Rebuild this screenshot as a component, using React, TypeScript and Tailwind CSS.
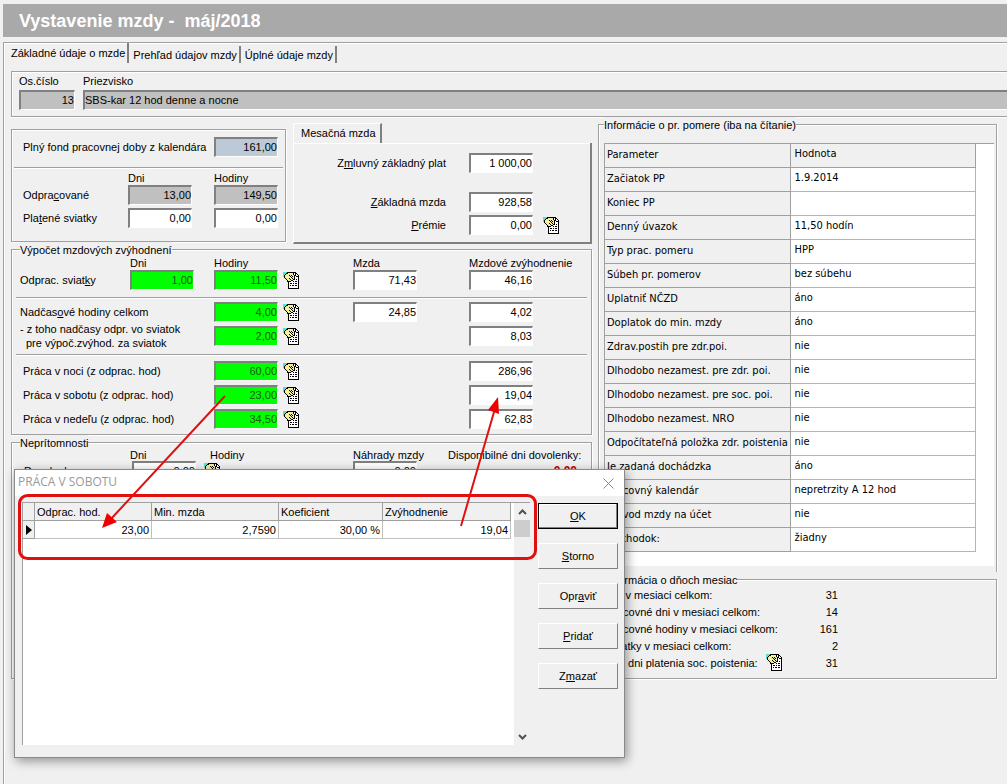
import { useId } from 'react'
import type { ReactNode } from 'react'

const ETCHED = 'border border-[#a0a0a0] shadow-[1px_1px_0_#fff,inset_1px_1px_0_#fff]'

const params = [
  ['Začiatok PP', '1.9.2014'],
  ['Koniec PP', ''],
  ['Denný úvazok', '11,50 hodín'],
  ['Typ prac. pomeru', 'HPP'],
  ['Súbeh pr. pomerov', 'bez súbehu'],
  ['Uplatniť NČZD', 'áno'],
  ['Doplatok do min. mzdy', 'áno'],
  ['Zdrav.postih pre zdr.poi.', 'nie'],
  ['Dlhodobo nezamest. pre zdr. poi.', 'nie'],
  ['Dlhodobo nezamest. pre soc. poi.', 'nie'],
  ['Dlhodobo nezamest. NRO', 'nie'],
  ['Odpočítateľná položka zdr. poistenia', 'nie'],
  ['Je zadaná dochádzka', 'áno'],
  ['Pracovný kalendár', 'nepretrzity A 12 hod'],
  ['Prevod mzdy na účet', 'nie'],
  ['Dôchodok:', 'žiadny'],
]

const monthDays = [
  { label: 'Dni v mesiaci celkom:', value: '31' },
  { label: 'Pracovné dni v mesiaci celkom:', value: '14' },
  { label: 'Pracovné hodiny v mesiaci celkom:', value: '161' },
  { label: 'Sviatky v mesiaci celkom:', value: '2' },
  { label: 'Kal. dni platenia soc. poistenia:', value: '31', detail: true },
]

export default function App() {
  return (
    <div className="relative flex min-h-screen flex-col overflow-hidden bg-[#f0f0f0] pt-1 pl-[3px] font-['Liberation_Sans',sans-serif] text-[11px] leading-3.5 text-black">
      <header className="flex h-[33px] items-center bg-[#a9a9a9] pl-4">
        <h1 className="text-[18px] leading-5 font-bold whitespace-pre text-white">Vystavenie mzdy -  máj/2018</h1>
      </header>

      <main className="mt-[5px] grow border-t border-l border-[#a0a0a0] shadow-[inset_1px_1px_0_#fff]">
        <nav className="flex h-5 items-end" role="tablist">
          <Tab selected>Základné údaje o mzde</Tab>
          <Tab>Prehľad údajov mzdy</Tab>
          <Tab>Úplné údaje mzdy</Tab>
        </nav>

        <div className="pt-2 pl-[7px]">
          <PersonBar />
          <div className="flex">
            <div className="flex w-[581px] shrink-0 flex-col">
              <div className="mt-1.5 flex items-start gap-[7px]">
                <WorkedTime />
                <MonthlyWage />
              </div>
              <Bonuses />
              <Absences />
            </div>
            <div className="mr-2.5 ml-1.5 min-w-0 grow">
              <EmploymentInfo />
              <MonthInfo />
            </div>
          </div>
        </div>
      </main>

      <SaturdayDialog />
      <Annotations />
    </div>
  )
}

function Tab({ selected, children }: { selected?: boolean; children: ReactNode }) {
  return (
    <button
      type="button"
      role="tab"
      aria-selected={!!selected}
      className={`border-r-2 border-[#808080] whitespace-nowrap ${selected ? 'h-5 pr-0.5 pl-[7px]' : 'h-[17px] pr-0.5 pl-1'}`}
    >
      {children}
    </button>
  )
}

type Tone = 'white' | 'gray' | 'blue' | 'green'

const tones: Record<Tone, string> = {
  white: 'bg-white',
  gray: 'bg-[#c0c0c0]',
  blue: 'bg-[#bccad8]',
  green: 'bg-[#00ff00] text-[#1c5a1c]',
}

function Num({ value, tone = 'white', label, id }: { value: string; tone?: Tone; label?: string; id?: string }) {
  return (
    <input
      id={id}
      aria-label={label}
      defaultValue={value}
      readOnly={tone === 'gray'}
      className={`block h-5 w-16 rounded-none border-t-2 border-r border-b border-l-2 border-t-[#808080] border-r-white border-b-white border-l-[#808080] pb-0.5 text-right outline-none ${tones[tone]}`}
    />
  )
}

function DetailButton({ label }: { label: string }) {
  return (
    <button type="button" aria-label={label} className="block size-[17px] shrink-0">
      <svg viewBox="0 0 17 17" className="size-full" shapeRendering="crispEdges">
        <path d="M0 0h5v2H2v3H0z" fill="#4fe3d8" />
        <path d="M5 1h8l3 3v12H5z" fill="#fff" />
        <path d="M4 0h9v1H4zM12 1h1v3h-1zM13 1h1v1h-1zM14 2h1v1h-1zM13 4h2v1h-2zM15 3h1v13h-1zM5 10h1v6H5zM5 16h11v1H5z" fill="#000" />
        <path d="M3 1h7v1h1v6h-1v1H5V8H3V7H1V3h1V2h1z" fill="#f2f09a" />
        <path
          d="M3 1h2v1H3zM2 2h1v1H2zM1 3h1v3H1zM2 6h1v1H2zM3 7h1v1H3zM4 8h1v2H4zM10 1h1v2h-1zM11 3h1v5h-1zM6 3h1v1H6zM7 4h1v1H7zM8 5h1v1H8zM9 6h1v1H9zM10 7h1v1h-1zM8 3h1v1H8zM9 4h1v1H9zM6 6h1v1H6zM7 7h1v1H7zM8 8h2v1H8zM5 9h3v1H5z"
          fill="#000"
        />
        <path d="M13 7h1v1h-1zM10 9h1v1h-1zM12 9h2v1h-2zM7 11h2v1H7zM10 11h1v1h-1zM12 11h2v1h-2zM7 13h1v1H7zM9 13h2v1H9zM12 13h2v1h-2z" fill="#000" />
      </svg>
    </button>
  )
}

function Rule() {
  return <hr className="h-0.5 border-t border-b border-t-[#a0a0a0] border-b-white" />
}

function GroupTitle({ children }: { children: ReactNode }) {
  return <legend className="bg-[#f0f0f0] pt-0.5 leading-3">{children}</legend>
}

function PersonBar() {
  return (
    <section className="flex gap-2 border-t border-b border-l border-[#a0a0a0] pt-0.5 pb-1.5 pl-[7px] shadow-[0_1px_0_#fff,inset_1px_1px_0_#fff]">
      <div>
        <label htmlFor="os-cislo" className="block">Os.číslo</label>
        <input
          id="os-cislo"
          readOnly
          defaultValue="13"
          className="mt-0.5 block h-5 w-14 border-t-2 border-r border-b border-l-2 border-t-[#808080] border-r-white border-b-white border-l-[#808080] bg-[#c0c0c0] pb-0.5 text-right outline-none"
        />
      </div>
      <div className="grow">
        <label htmlFor="priezvisko" className="block">Priezvisko</label>
        <input
          id="priezvisko"
          readOnly
          defaultValue="SBS-kar 12 hod denne a nocne"
          className="mt-0.5 block h-5 w-full border-t-2 border-b border-l-2 border-t-[#808080] border-b-white border-l-[#808080] bg-[#c0c0c0] pb-0.5 outline-none"
        />
      </div>
    </section>
  )
}

function WorkedTime() {
  return (
    <section className={`mt-1.5 h-[113px] w-[275px] ${ETCHED}`}>
      <div className="flex items-center justify-between pt-[7px] pr-[7px] pb-2.5 pl-[11px]">
        <label htmlFor="fond">Plný fond pracovnej doby z kalendára</label>
        <Num id="fond" value="161,00" tone="blue" />
      </div>
      <div className="px-0.5">
        <Rule />
      </div>
      <div className="grid grid-cols-[105px_86px_64px] items-center pt-0.5 pl-[11px]">
        <span className="col-start-2">Dni</span>
        <span>Hodiny</span>
        <span>Odpra<u>c</u>ované</span>
        <Num label="Odpracované dni" value="13,00" tone="gray" />
        <Num label="Odpracované hodiny" value="149,50" tone="gray" />
        <span className="mt-[3px]">Pla<u>t</u>ené sviatky</span>
        <div className="mt-[3px]"><Num label="Platené sviatky dni" value="0,00" /></div>
        <div className="mt-[3px]"><Num label="Platené sviatky hodiny" value="0,00" /></div>
      </div>
    </section>
  )
}

function WageRow({ label, value, detail }: { label: ReactNode; value: string; detail?: boolean }) {
  const id = useId()
  return (
    <div className="flex items-center">
      <label htmlFor={id} className="mr-[23px] w-[152px] text-right">{label}</label>
      <Num id={id} value={value} />
      {detail && <div className="ml-2.5"><DetailButton label="Detail prémií" /></div>}
    </div>
  )
}

function MonthlyWage() {
  return (
    <section className="grow">
      <div role="tablist" className="flex">
        <button type="button" role="tab" aria-selected className="h-5 border-t border-r-2 border-l border-t-white border-r-[#808080] border-l-white pr-1 pb-0.5 pl-[7px]">
          Mesačná mzda
        </button>
      </div>
      <div className="border-r-2 border-b-2 border-l border-r-[#808080] border-b-[#808080] border-l-white pt-2.5 pb-[7px] shadow-[inset_0_1px_0_#fff]">
        <WageRow label={<>Z<u>m</u>luvný základný plat</>} value="1 000,00" />
        <div className="mt-[19px] flex flex-col gap-[3px]">
          <WageRow label={<><u>Z</u>ákladná mzda</>} value="928,58" />
          <WageRow label={<><u>P</u>rémie</>} value="0,00" detail />
        </div>
      </div>
    </section>
  )
}

type BonusProps = { label: ReactNode; name: string; days?: string; hours: string; wage?: string; bonus: string }

function BonusRow({ label, name, days, hours, wage, bonus }: BonusProps) {
  return (
    <div className="grid grid-cols-[110px_84px_69px_70px_116px_64px] items-center">
      <span className={`whitespace-nowrap ${days ? '' : 'col-span-2'}`}>{label}</span>
      {days && <Num label={`${name} dni`} value={days} tone="green" />}
      <Num label={`${name} hodiny`} value={hours} tone="green" />
      <DetailButton label={`Detail: ${name}`} />
      {wage ? <Num label={`${name} mzda`} value={wage} /> : <span />}
      <Num label={`${name} zvýhodnenie`} value={bonus} />
    </div>
  )
}

function Bonuses() {
  return (
    <fieldset className={`-mt-0.5 px-2 pb-[5px] ${ETCHED}`}>
      <GroupTitle>Výpočet mzdových zvýhodnení</GroupTitle>
      <div className="grid grid-cols-[110px_84px_139px_116px_1fr]">
        <span className="col-start-2">Dni</span>
        <span>Hodiny</span>
        <span>Mzda</span>
        <span>Mzdové zvýhodnenie</span>
      </div>
      <BonusRow label={<>Odprac. sviat<u>k</u>y</>} name="Sviatky" days="1,00" hours="11,50" wage="71,43" bonus="46,16" />
      <div className="-mx-1 pt-[7px] pb-[3px]"><Rule /></div>
      <BonusRow label={<>Nadčas<u>o</u>vé hodiny celkom</>} name="Nadčasy" hours="4,00" wage="24,85" bonus="4,02" />
      <BonusRow
        label={<>- z toho nadčasy odpr. vo sviatok<br /><span className="pl-1.5">pre výpoč.zvýhod. za sviatok</span></>}
        name="Nadčasy vo sviatok"
        hours="2,00"
        bonus="8,03"
      />
      <div className="-mx-1 pt-1 pb-[5px]"><Rule /></div>
      <div className="flex flex-col gap-1">
        <BonusRow label={<span className="pl-[3px]">Práca v noci (z odprac. hod)</span>} name="Noc" hours="60,00" bonus="286,96" />
        <BonusRow label={<span className="pl-[3px]">Práca v sobotu (z odprac. hod)</span>} name="Sobota" hours="23,00" bonus="19,04" />
        <BonusRow label={<span className="pl-[3px]">Práca v nedeľu (z odprac. hod)</span>} name="Nedeľa" hours="34,50" bonus="62,83" />
      </div>
    </fieldset>
  )
}

function Absences() {
  return (
    <fieldset className={`grow px-2 ${ETCHED}`}>
      <GroupTitle>Neprítomnosti</GroupTitle>
      <div className="grid grid-cols-[110px_80px_143px_95px_1fr] leading-3">
        <span className="col-start-2">Dni</span>
        <span>Hodiny</span>
        <span>Náhrady mzdy</span>
        <span>Disponibilné dni dovolenky:</span>
      </div>
      <div className="grid grid-cols-[112px_72px_149px_64px_1fr] items-center">
        <span className="pl-1">Dovolenka</span>
        <Num label="Dovolenka dni" value="0,00" />
        <DetailButton label="Detail dovolenky" />
        <Num label="Náhrada za dovolenku" value="0,00" />
        <span className="pr-1.5 text-right text-[12px] font-bold text-[#c00000]">0,00</span>
      </div>
    </fieldset>
  )
}

function EmploymentInfo() {
  return (
    <fieldset className="min-w-0 border border-b-0 border-[#a0a0a0] pt-3 pr-0.5 pb-1.5 pl-[5px] shadow-[1px_0_0_#fff,inset_1px_1px_0_#fff]">
      <GroupTitle>Informácie o pr. pomere (iba na čítanie)</GroupTitle>
      <div className="border-t border-[#a0a0a0] bg-white pr-[18px] pb-3.5">
        <table className="-mt-px w-full table-fixed border-collapse font-['DejaVu_Sans_Condensed','DejaVu_Sans',sans-serif] text-[11px]">
          <thead>
            <tr className="h-6 bg-[#f0f0f0]">
              <th className="border border-[#a0a0a0] p-0 pb-0.5 pl-0.5 text-left font-normal">Parameter</th>
              <th className="border border-[#a0a0a0] p-0 pb-1 pl-1 text-left font-normal">Hodnota</th>
            </tr>
          </thead>
          <tbody>
            {params.map(([name, value]) => (
              <tr key={name} className="h-6">
                <th className="border border-[#a0a0a0] bg-[#f0f0f0] p-0 pb-0.5 pl-0.5 text-left font-normal whitespace-nowrap">{name}</th>
                <td className="border border-[#b4b4b4] p-0 pb-1 pl-1">{value}</td>
              </tr>
            ))}
          </tbody>
        </table>
      </div>
    </fieldset>
  )
}

function MonthInfo() {
  return (
    <fieldset className={`min-w-0 px-[7px] pb-[7px] ${ETCHED}`}>
      <GroupTitle>Informácia o dňoch mesiac</GroupTitle>
      <dl className="w-[232px]">
        {monthDays.map(row => (
          <div key={row.label} className="flex h-[17px] items-center">
            <dt className="w-40 shrink-0 whitespace-nowrap">{row.label}</dt>
            {row.detail && <DetailButton label="Detail dní poistenia" />}
            <dd className="ml-auto">{row.value}</dd>
          </div>
        ))}
      </dl>
    </fieldset>
  )
}

function DialogButton({ primary, children }: { primary?: boolean; children: ReactNode }) {
  return (
    <button
      type="button"
      className={`h-[26px] w-20 bg-[#f0f0f0] ${primary ? 'border border-black shadow-[inset_-1px_-1px_0_#808080,inset_1px_1px_0_#fff]' : 'border border-t-white border-r-[#808080] border-b-[#808080] border-l-white'}`}
    >
      {children}
    </button>
  )
}

function SaturdayDialog() {
  const head = 'h-[18px] border-r border-b border-[#a0a0a0] p-0 pl-0.5 text-left font-normal'
  const cell = 'h-[18px] border-r border-b border-[#c0c0c0] p-0 pr-0.5 text-right'
  return (
    <div
      role="dialog"
      aria-label="Práca v sobotu"
      className="absolute top-[469px] left-3.5 w-[611px] border border-[#8a8a8a] bg-[#f0f0f0] shadow-[2px_3px_10px_rgba(0,0,0,0.4)]"
    >
      <div className="flex h-[26px] items-center justify-between bg-white pr-2.5 pl-[3px]">
        <span className="pb-0.5 font-['Open_Sans',sans-serif] text-[12px] text-[#999]">PRÁCA V SOBOTU</span>
        <button type="button" aria-label="Zavrieť" className="block size-[11px]">
          <svg viewBox="0 0 11 11" className="size-full" stroke="#888">
            <path d="M.5.5l10 10M10.5.5l-10 10" />
          </svg>
        </button>
      </div>
      <div className="flex gap-2 pt-1.5 pr-1.5 pb-3 pl-[7px]">
        <div className="flex h-[243px] grow justify-between border-t border-l border-[#a0a0a0] bg-white">
          <table className="h-9 w-[488px] table-fixed border-separate border-spacing-0">
            <thead>
              <tr className="bg-[#f0f0f0]">
                <th className={`${head} w-3`} />
                <th className={`${head} w-[117px]`}>Odprac. hod.</th>
                <th className={`${head} w-[127px]`}>Min. mzda</th>
                <th className={`${head} w-[104px]`}>Koeficient</th>
                <th className={head}>Zvýhodnenie</th>
              </tr>
            </thead>
            <tbody>
              <tr>
                <td className="border-r border-b border-[#a0a0a0] bg-[#f0f0f0] p-0">
                  <svg viewBox="0 0 6 10" className="ml-[3px] h-2.5 w-1.5">
                    <path d="M0 0l6 5-6 5z" />
                  </svg>
                </td>
                <td className={cell}>23,00</td>
                <td className={cell}>2,7590</td>
                <td className={cell}>30,00 %</td>
                <td className={cell}>19,04</td>
              </tr>
            </tbody>
          </table>
          <div className="flex w-4 flex-col items-center bg-[#f0f0f0]">
            <ScrollArrow up />
            <div className="h-[17px] w-full bg-[#cdcdcd]" />
            <div className="mt-auto"><ScrollArrow /></div>
          </div>
        </div>
        <div className="flex flex-col gap-3.5 pt-px">
          <DialogButton primary><u>O</u>K</DialogButton>
          <DialogButton><u>S</u>torno</DialogButton>
          <DialogButton>Opr<u>a</u>viť</DialogButton>
          <DialogButton><u>P</u>ridať</DialogButton>
          <DialogButton>Z<u>m</u>azať</DialogButton>
        </div>
      </div>
    </div>
  )
}

function ScrollArrow({ up }: { up?: boolean }) {
  return (
    <button type="button" aria-label={up ? 'Nahor' : 'Nadol'} className="flex h-[17px] w-4 items-center justify-center">
      <svg viewBox="0 0 9 6" className="h-1.5 w-[9px]" fill="none" stroke="#505050" strokeWidth="2">
        <path d={up ? 'M1 5l3.5-3.5L8 5' : 'M1 1l3.5 3.5L8 1'} />
      </svg>
    </button>
  )
}

// red frame and arrows laid over the form
function Annotations() {
  return (
    <svg className="pointer-events-none absolute top-0 left-0 h-[784px] w-[640px]" fill="none" stroke="#e01010">
      <rect x="19.5" y="495.5" width="516" height="63" rx="8" strokeWidth="3" />
      <path d="M225 396L110 520M461 526l33-114" strokeWidth="2" />
      <path d="M102 528l5-15 10 9zM498 397l-10 13 11 4z" fill="#f00000" stroke="none" />
    </svg>
  )
}
